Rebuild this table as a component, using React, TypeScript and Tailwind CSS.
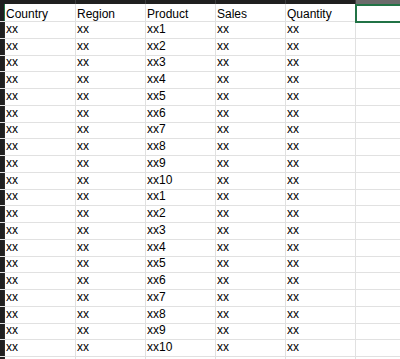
import React from 'react';

const headers = ['Country', 'Region', 'Product', 'Sales', 'Quantity'];

// 20 visible data rows
const rows = Array.from({ length: 20 }, (_, i) => ['xx', 'xx', `xx${(i % 10) + 1}`, 'xx', 'xx']);

export default function App() {
  return (
    <div
      className="w-[400px] h-[359px] overflow-hidden bg-white text-black flex flex-col text-[12px] leading-none"
      style={{ fontFamily: '"Liberation Sans", Arial, sans-serif' }}
    >
      {/* Column header strip (mostly cut off) */}
      <div className="h-[4px] shrink-0 flex bg-[#202020]">
        <div className="w-[5px] shrink-0" />
        <div className="w-[71px] shrink-0 border-r border-[#3d3d3d]" />
        <div className="w-[70px] shrink-0 border-r border-[#3d3d3d]" />
        <div className="w-[70px] shrink-0 border-r border-[#3d3d3d]" />
        <div className="w-[70px] shrink-0 border-r border-[#3d3d3d]" />
        <div className="w-[70px] shrink-0 border-r border-[#3d3d3d]" />
        <div className="flex-1 bg-[#6b6b6b]" />
      </div>

      {/* Header row */}
      <div className="h-[18px] shrink-0 flex border-b border-[#e1e1e1]">
        <div className="w-[5px] shrink-0 bg-[#202020] border-r border-[#217346]" />
        {headers.map((h, i) => (
          <div
            key={h}
            className={`${i === 0 ? 'w-[71px]' : 'w-[70px]'} shrink-0 flex items-end pb-[1px] pl-[1px] border-r border-[#e1e1e1] whitespace-nowrap`}
          >
            {h}
          </div>
        ))}
        <div className="flex-1 relative">
          {/* selected cell */}
          <div className="absolute left-[-1px] top-0 bottom-[-2px] right-[-10px] border-2 border-[#217346]" />
        </div>
      </div>

      {/* Data rows */}
      {rows.map((r, i) => (
        <div
          key={i}
          className={`${i % 4 === 2 ? 'h-[16px]' : 'h-[17px]'} shrink-0 flex border-b border-[#e1e1e1]`}
        >
          <div className="w-[5px] shrink-0 bg-[#202020] border-r border-[#2c2c2c]" />
          {r.map((v, j) => (
            <div
              key={j}
              className={`${j === 0 ? 'w-[71px]' : 'w-[70px]'} shrink-0 flex items-end pb-[3px] pl-[1px] border-r border-[#e1e1e1] whitespace-nowrap`}
            >
              {v}
            </div>
          ))}
          <div className="flex-1" />
        </div>
      ))}

      {/* next row, cut off by the window */}
      <div className="h-[17px] shrink-0 flex">
        <div className="w-[5px] shrink-0 bg-[#202020] border-r border-[#2c2c2c]" />
        <div className="w-[71px] shrink-0 border-r border-[#e1e1e1]" />
        <div className="w-[70px] shrink-0 border-r border-[#e1e1e1]" />
        <div className="w-[70px] shrink-0 border-r border-[#e1e1e1]" />
        <div className="w-[70px] shrink-0 border-r border-[#e1e1e1]" />
        <div className="w-[70px] shrink-0 border-r border-[#e1e1e1]" />
        <div className="flex-1" />
      </div>
    </div>
  );
}
